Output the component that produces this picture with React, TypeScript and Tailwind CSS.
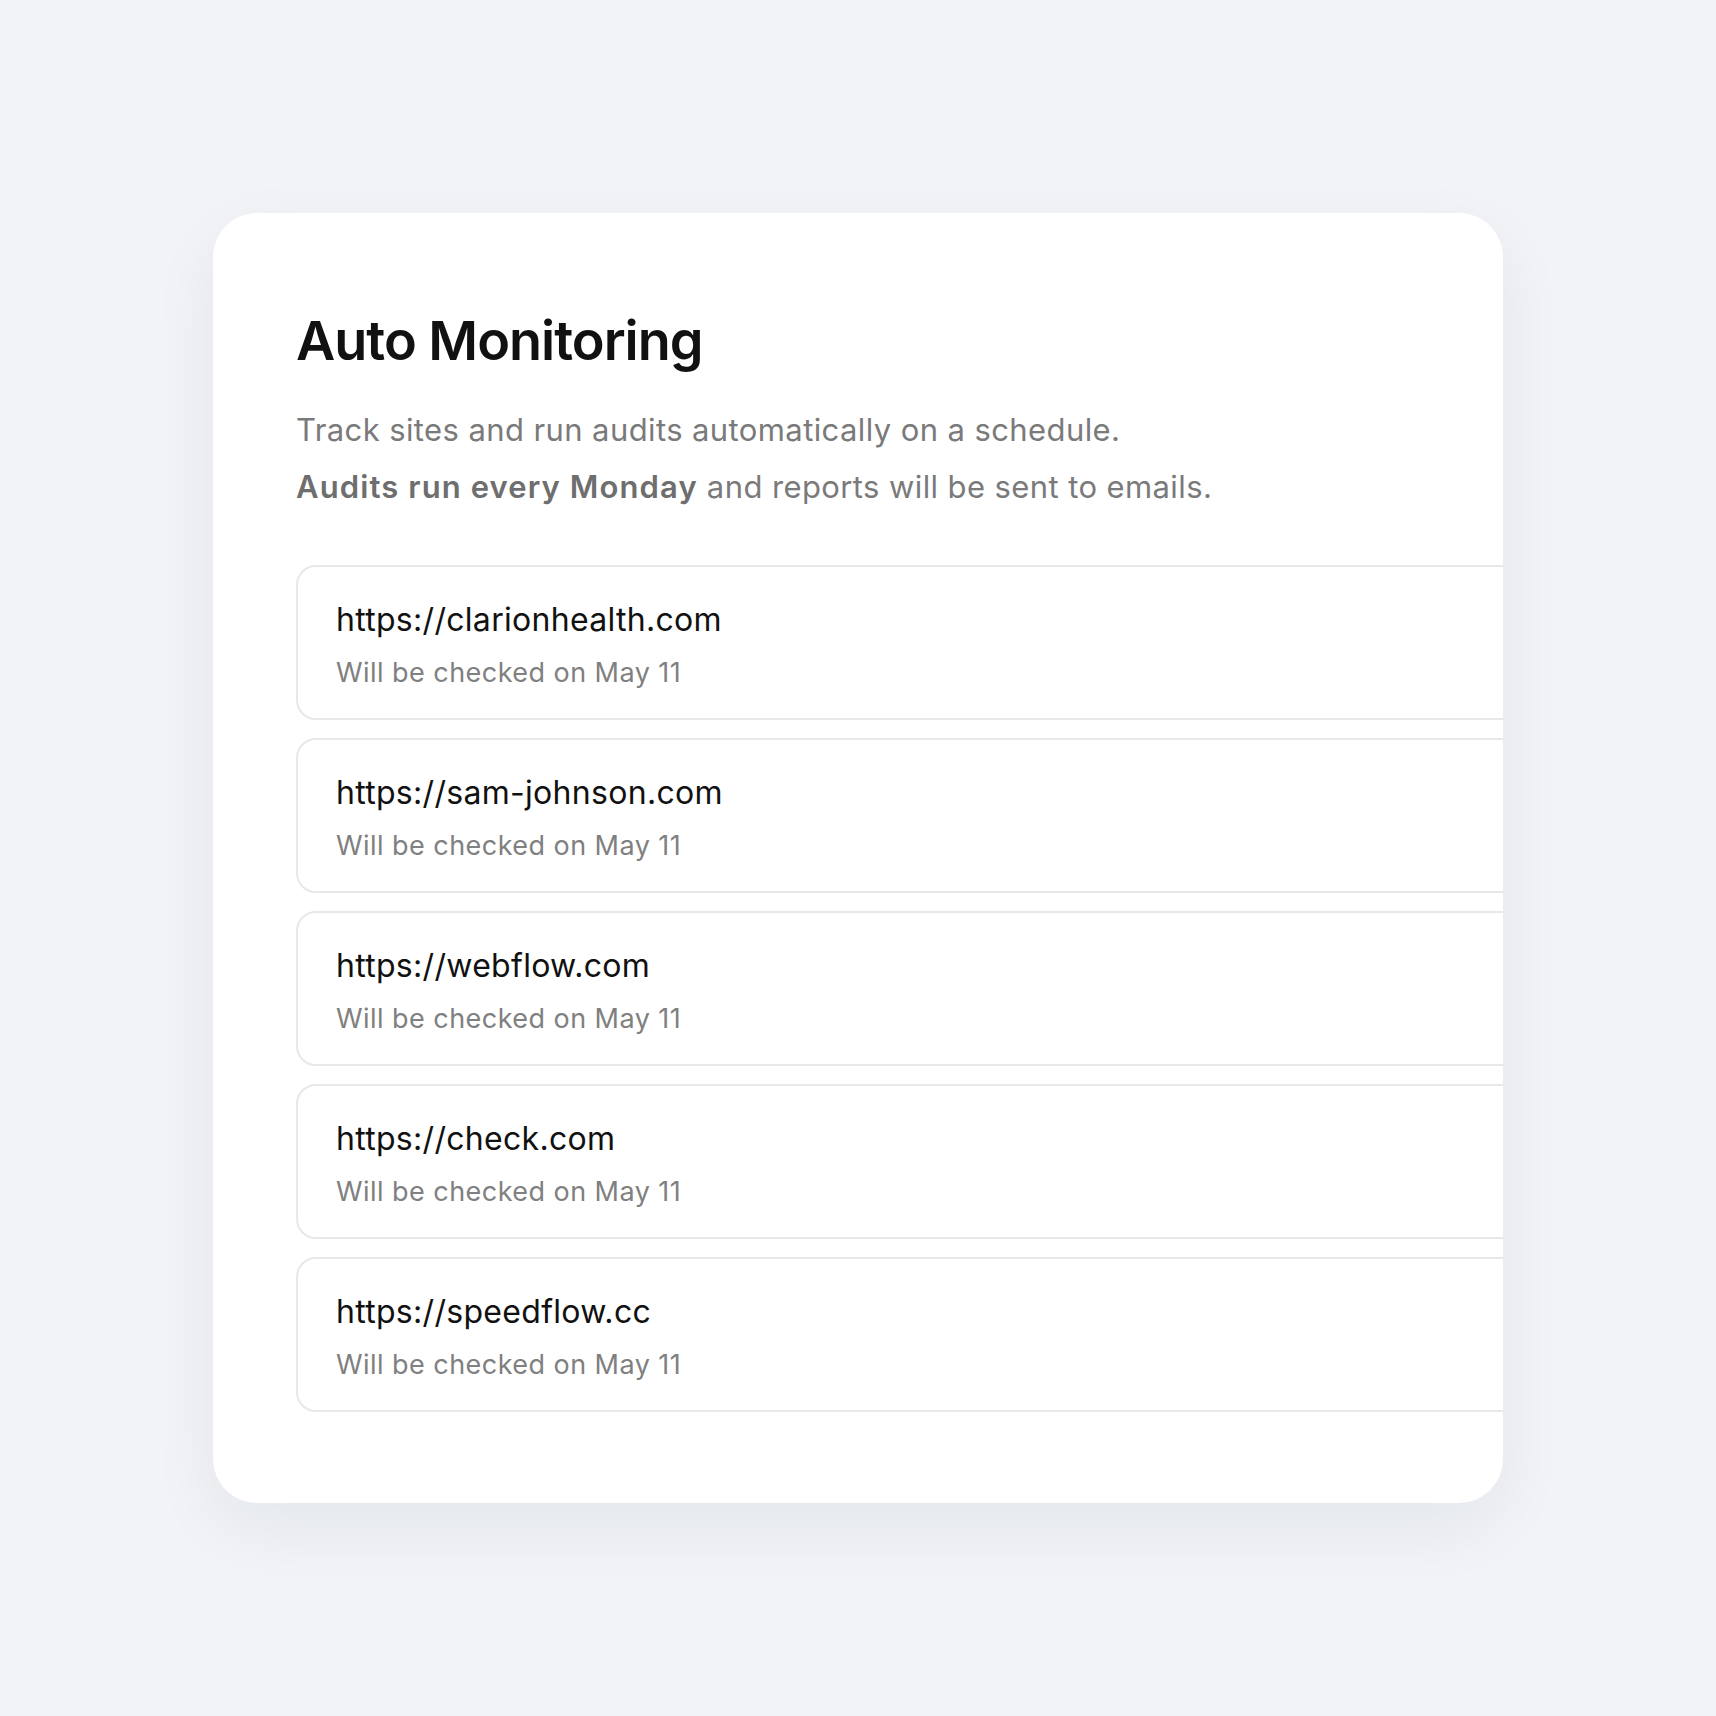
import React from "react";

const sites = [
  "https://clarionhealth.com",
  "https://sam-johnson.com",
  "https://webflow.com",
  "https://check.com",
  "https://speedflow.cc",
];

export default function App() {
  return (
    <div
      className="w-[1716px] h-[1716px] bg-[#f1f3f6] flex items-center justify-center"
      style={{ fontFamily: "Inter, 'Noto Sans', sans-serif" }}
    >
      <div className="w-[1290px] h-[1290px] rounded-[44px] bg-white overflow-hidden shadow-[0_24px_70px_rgba(20,30,60,0.06)] pl-[83px] pt-[94px]">
        <h1 className="text-[54px] leading-[68px] font-semibold text-[#111111] tracking-[-1px]">
          Auto Monitoring
        </h1>
        <div className="mt-[26px] text-[31px] leading-[57px] text-[#7a7a7a] tracking-[0.4px]">
          <p>Track sites and run audits automatically on a schedule.</p>
          <p>
            <span className="font-semibold text-[#6e6e6e] tracking-[1.1px]">Audits run every Monday</span> and
            reports will be sent to emails.
          </p>
        </div>
        <div className="mt-[50px] flex flex-col gap-[18px] w-[1400px]">
          {sites.map((s) => (
            <div
              key={s}
              className="h-[155px] rounded-[20px] border-2 border-[#e8e8e8] pl-[38px] pt-[33px]"
            >
              <div className="text-[32px] leading-[40px] text-[#111111] tracking-[0.3px]">{s}</div>
              <div className="mt-[15px] text-[27px] leading-[36px] text-[#808080] tracking-[0.45px]">
                Will be checked on May 11
              </div>
            </div>
          ))}
        </div>
      </div>
    </div>
  );
}
